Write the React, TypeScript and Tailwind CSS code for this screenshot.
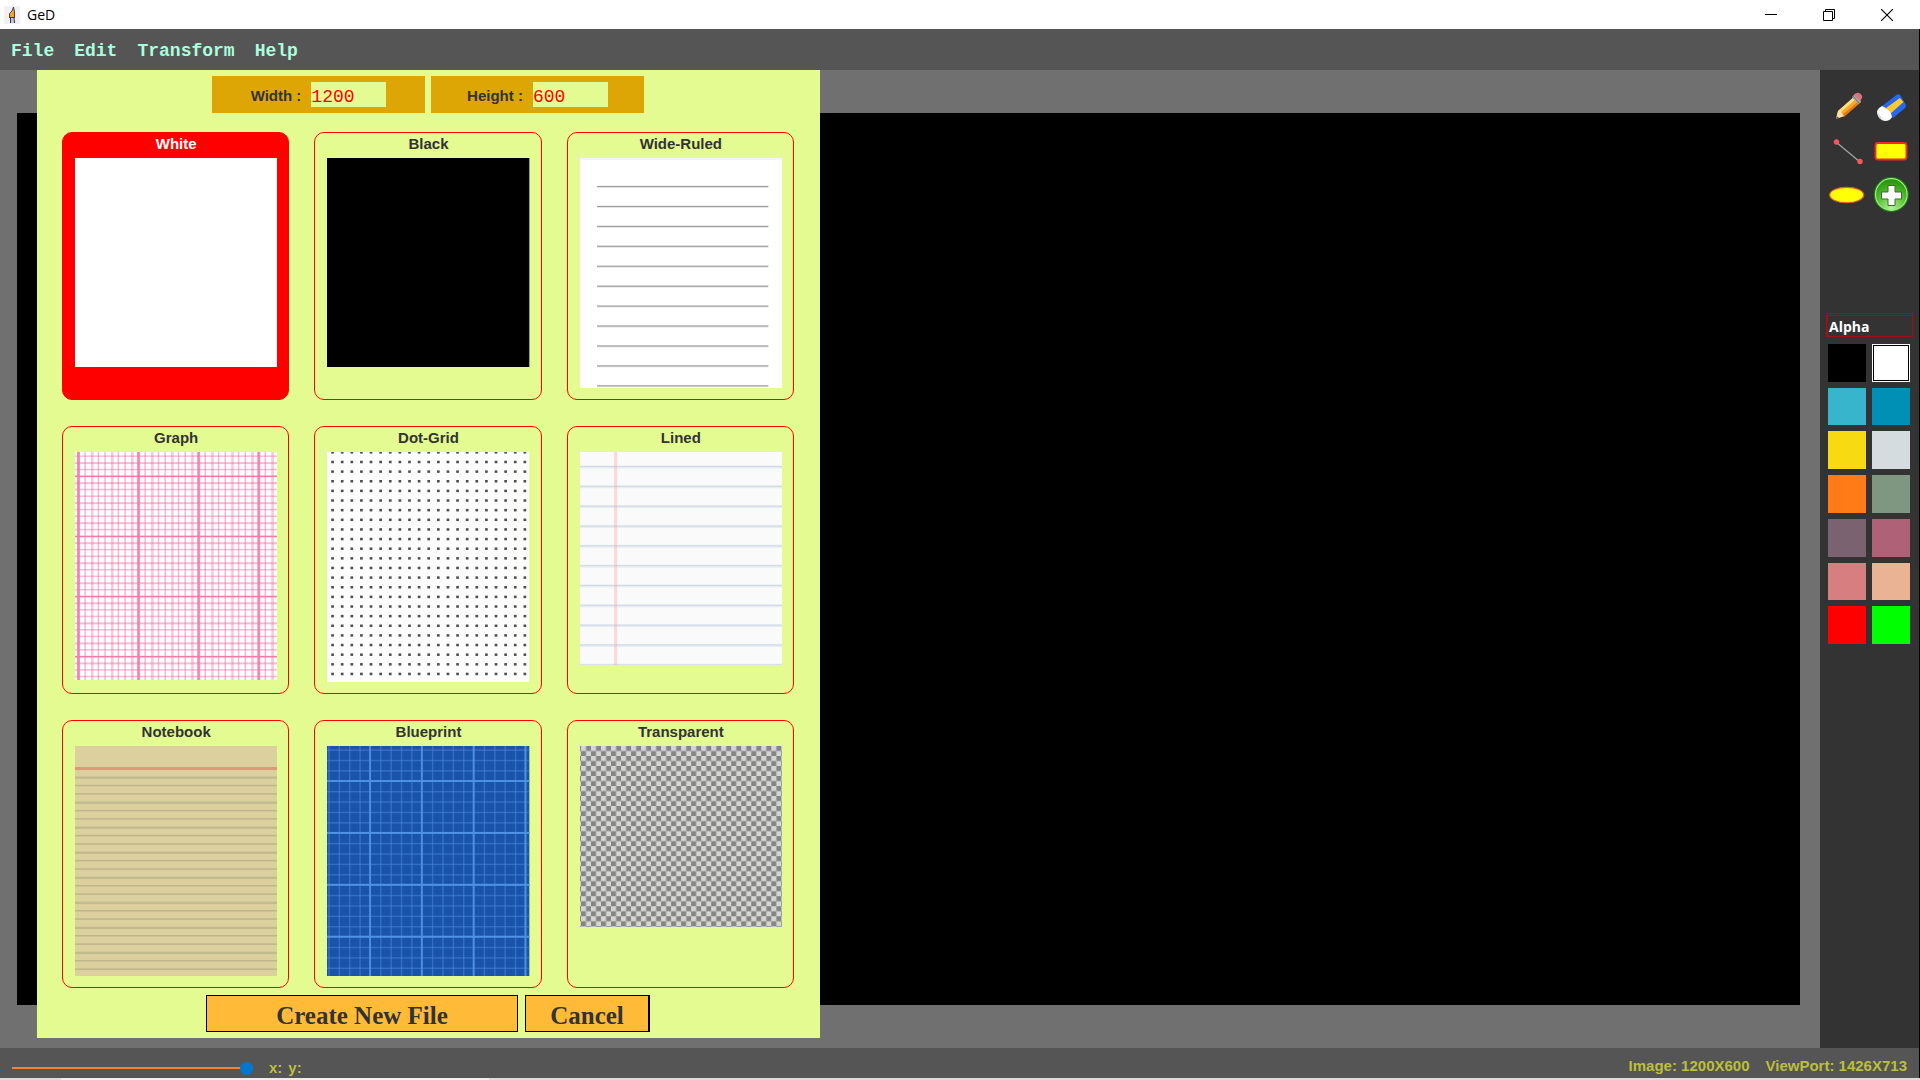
import { useState } from "react";
import type { ReactNode } from "react";

const range = (n: number) => Array.from({ length: n }, (_, i) => i);

function Paper({ height, children }: { height: number; children?: ReactNode }) {
  return (
    <svg viewBox={`0 0 202 ${height}`} className="block h-auto w-full" aria-hidden="true">
      {children}
    </svg>
  );
}

const white = (
  <Paper height={209}>
    <rect width="202" height="209" fill="#fff" />
  </Paper>
);

const black = (
  <Paper height={209}>
    <rect width="202" height="209" fill="#000" />
  </Paper>
);

const wideRuled = (
  <Paper height={230}>
    <rect width="202" height="230" fill="#fff" />
    <rect width="202" height="2" fill="#f4f4f4" />
    {range(11).map((i) => (
      <g key={i}>
        <rect x="17" y={27.5 + i * 19.9} width="171" height="2.4" fill="#e2e2e2" />
        <rect x="17" y={28 + i * 19.9} width="171" height="1" fill="#9c9c9c" />
      </g>
    ))}
  </Paper>
);

const graph = (
  <Paper height={228}>
    <rect width="202" height="228" fill="#fff" />
    {range(30).map((i) => (
      <rect key={i} x={2.6 + i * 6.667} y="0" width={i % 3 === 2 ? 2.6 : 1.5} height="228" fill="#f06a9c" fillOpacity={i % 3 === 2 ? 0.36 : 0.48} />
    ))}
    {range(34).map((i) => (
      <rect key={i} x="0" y={3.4 + i * 6.667} width="202" height={i % 3 === 1 ? 2 : 1.5} fill="#f06a9c" fillOpacity="0.45" />
    ))}
    {range(4).map((i) => (
      <g key={i} fill="#f27ca8">
        <rect x={2 + i * 60} y="0" width="3" height="228" fillOpacity="0.8" />
        <rect x="0" y={23.7 + i * 60} width="202" height="1.4" />
      </g>
    ))}
  </Paper>
);

const dotGrid = (
  <Paper height={230}>
    <rect width="202" height="230" fill="#fdfdfd" />
    {range(24).map((r) =>
      range(21).map((c) => (
        <rect key={`${r}-${c}`} x={4.2 + c * 9.6} y={r * 9.62 - 0.9} width="2.7" height="2.5" fill="#3c3c3c" fillOpacity="0.9" />
      )),
    )}
  </Paper>
);

const lined = (
  <Paper height={213}>
    <rect width="202" height="213" fill="#fafafa" />
    {range(11).map((i) => (
      <g key={i}>
        <rect x="0" y={13.4 + i * 19.8} width="202" height="3" fill="#e8ecf1" />
        <rect x="0" y={14 + i * 19.8} width="202" height="1" fill="#d2dbe6" />
      </g>
    ))}
    <rect x="34" y="0" width="3" height="213" fill="#ff9aa8" fillOpacity="0.36" />
  </Paper>
);

const notebook = (
  <Paper height={230}>
    <rect width="202" height="230" fill="#ddd09f" />
    <rect y="21" width="202" height="3" fill="#db9a7b" />
    {range(24).map((i) => (
      <rect key={i} y={30.4 + i * 8.333} width="202" height={i % 3 === 0 ? 2.4 : 1.5} fill="#b3ad87" fillOpacity={i % 3 === 0 ? 0.6 : 0.75} />
    ))}
  </Paper>
);

const blueprint = (
  <Paper height={230}>
    <rect width="202" height="230" fill="#1a53aa" />
    {range(20).map((i) => (
      <rect key={i} x={1.2 + i * 10.35} y="0" width="1.5" height="230" fill="#4a8ada" fillOpacity="0.5" />
    ))}
    {range(22).map((i) => (
      <rect key={i} x="0" y={3.4 + i * 10.37} width="202" height="1.5" fill="#4a8ada" fillOpacity="0.5" />
    ))}
    {range(4).map((i) => (
      <g key={i} fill="#4f92e6">
        <rect x={42 + i * 51.7} y="0" width="1.9" height="230" fillOpacity="0.9" />
        <rect x="0" y={34 + i * 51.8} width="202" height="1.9" />
      </g>
    ))}
  </Paper>
);

const transparent = (
  <Paper height={181}>
    <defs>
      <pattern id="checker" x="1" width="10" height="10" patternUnits="userSpaceOnUse">
        <rect width="10" height="10" fill="#d5d5d3" />
        <rect x="5" width="5" height="5" fill="#858585" />
        <rect y="5" width="5" height="5" fill="#858585" />
      </pattern>
    </defs>
    <rect width="202" height="181" fill="url(#checker)" />
  </Paper>
);

const papers = [
  { name: "White", art: white },
  { name: "Black", art: black },
  { name: "Wide-Ruled", art: wideRuled },
  { name: "Graph", art: graph },
  { name: "Dot-Grid", art: dotGrid },
  { name: "Lined", art: lined },
  { name: "Notebook", art: notebook },
  { name: "Blueprint", art: blueprint },
  { name: "Transparent", art: transparent },
];

const tools = [
  {
    name: "Pencil",
    art: (
      <>
        <path d="M8 31 L10 23 L27 8 L33 14 L16 28 Z" fill="#f9a825" />
        <path d="M10 23 L26 9 L28 11 L12 25 Z" fill="#ffe08a" />
        <path d="M14 27 L31 13 L33 14 L16 29 Z" fill="#e07b12" />
        <path d="M8 31 L10 23 L13 24 L16 28 Z" fill="#f7dfae" />
        <path d="M8 31 L9 28.500 L11 30 Z" fill="#4a4036" />
        <path d="M24 9 L27 6 L33 13 L30 16 Z" fill="#a9a9a9" />
        <path d="M25 8 L31 15" stroke="#6c6c6c" />
        <path d="M26 7 Q28 4 31 5 Q35 7 34 10 L32 13 Z" fill="#d9747c" />
      </>
    ),
  },
  {
    name: "Eraser",
    art: (
      <>
        <path d="M10 18 L25 6.500 Q27 6 28 7 L34 17 Q34 19 33 20 L21 30 Z" fill="#2468f5" />
        <path d="M14 20 L28 10 L31.500 14 L18 26 Z" fill="#fdc92e" />
        <path d="M10 18 Q5 21 5 24 Q6 32 13 33 Q18 33 20 29 Q19 22 10 18 Z" fill="#fff" />
        <path d="M5 24 Q6 31 12 33 L9 29 Z" fill="#d4d7de" />
      </>
    ),
  },
  {
    name: "Line",
    art: (
      <>
        <path d="M8 10 L32 30" stroke="#a3a3a3" strokeWidth="1.300" />
        <circle cx="8.500" cy="10" r="2.700" fill="#f4575c" />
        <circle cx="32" cy="29.500" r="2.700" fill="#f4575c" />
      </>
    ),
  },
  {
    name: "Rectangle",
    art: <rect x="3.500" y="11" width="31" height="16.500" rx="2.500" fill="#ffff05" stroke="#ef2b2b" strokeWidth="1.900" />,
  },
  {
    name: "Ellipse",
    art: <ellipse cx="18.700" cy="19" rx="17" ry="7.700" fill="#ffff05" stroke="#e3622f" strokeWidth="1.200" />,
  },
  {
    name: "Add",
    art: (
      <>
        <defs>
          <radialGradient id="green" cx="0.5" cy="0.95" r="0.95">
            <stop offset="0" stopColor="#b6f29b" />
            <stop offset="0.45" stopColor="#62c63c" />
            <stop offset="1" stopColor="#1f9107" />
          </radialGradient>
        </defs>
        <circle cx="19.300" cy="18.500" r="17.500" fill="#16850a" />
        <circle cx="19.300" cy="18.500" r="15.800" fill="url(#green)" stroke="#a5e58d" strokeWidth="1.200" />
        <path d="M16 9.500 H23 V16 H29.500 V23 H23 V29.500 H16 V23 H9.500 V16 H16 Z" fill="#fff" stroke="#3c6e2c" strokeWidth="1" />
      </>
    ),
  },
];

const swatches = [
  { name: "Black", tone: "bg-black" },
  { name: "White", tone: "bg-white" },
  { name: "Sky", tone: "bg-[#36b5cc]" },
  { name: "Ocean", tone: "bg-[#0090b6]" },
  { name: "Yellow", tone: "bg-[#f7da11]" },
  { name: "Mist", tone: "bg-[#d4dce0]" },
  { name: "Orange", tone: "bg-[#ff7b17]" },
  { name: "Sage", tone: "bg-[#7f9680]" },
  { name: "Plum", tone: "bg-[#7a6270]" },
  { name: "Rose", tone: "bg-[#af6277]" },
  { name: "Coral", tone: "bg-[#d77e81]" },
  { name: "Peach", tone: "bg-[#e9b394]" },
  { name: "Red", tone: "bg-[#ff0000]" },
  { name: "Green", tone: "bg-[#00ff00]" },
];

function TitleBar() {
  return (
    <header className="flex h-[29px] shrink-0 items-center bg-white pr-1 pl-1 text-black">
      <svg width="16" height="18" viewBox="0 0 16 18" aria-hidden="true">
        <rect width="16" height="18" fill="#f1f1f3" />
        <path d="M9.500 1 L11 6 V11 H5 V8 L8 5 Z" fill="#f5a32a" />
        <path d="M9.500 1 L8 5 L5.500 7.500 V11 M9.500 1 L10.500 6 V11" fill="none" stroke="#3a3550" strokeWidth="0.900" />
        <path d="M5 11.500 H11" stroke="#4a3a30" />
        <path d="M7 12 H9.500 L10 17 H7 Z" fill="#c4c6da" />
        <path d="M6.500 12 V17 M10 12 L10.500 17" stroke="#343152" />
      </svg>
      <h1 className="ml-[7px] flex-1 font-['Open_Sans',sans-serif] text-[14px] leading-5">GeD</h1>
      <button aria-label="Minimize" className="flex h-full w-[58px] items-center justify-center">
        <svg width="12" height="12" viewBox="0 0 12 12"><path d="M0 5.500 H12" stroke="#000" /></svg>
      </button>
      <button aria-label="Restore" className="flex h-full w-[58px] items-center justify-center">
        <svg width="12" height="12" viewBox="0 0 12 12" fill="none" stroke="#000">
          <path d="M0.500 2.500 H9.500 V11.500 H0.500 Z M2.500 2.500 V0.500 H11.500 V9.500 H9.500" />
        </svg>
      </button>
      <button aria-label="Close" className="flex h-full w-[58px] items-center justify-center">
        <svg width="12" height="12" viewBox="0 0 12 12"><path d="M0 0 L12 12 M12 0 L0 12" stroke="#000" strokeWidth="1.100" /></svg>
      </button>
    </header>
  );
}

function SizeField({ label, value, onChange }: { label: string; value: string; onChange: (v: string) => void }) {
  return (
    <label className="flex h-[37px] w-[213px] items-center justify-center gap-2.5 bg-[#dea605] text-[15px] leading-5 font-bold">
      <span className="pt-0.5">{label} :</span>
      <input
        type="text"
        value={value}
        onChange={(e) => onChange(e.target.value)}
        className="h-[25px] w-[75px] bg-[#e4fb92] pt-1 font-['Liberation_Mono',monospace] text-[18px] leading-5 font-normal text-[#ff0000] outline-none"
      />
    </label>
  );
}

function NewFileDialog() {
  const [width, setWidth] = useState("1200");
  const [height, setHeight] = useState("600");
  const [paper, setPaper] = useState("White");
  return (
    <form
      onSubmit={(e) => e.preventDefault()}
      className="absolute top-0 left-[37px] w-[783px] bg-[#e4fb92] py-1.5 pr-[26px] pl-[25px] text-[#333333]"
    >
      <div className="flex justify-center gap-1.5">
        <SizeField label="Width" value={width} onChange={setWidth} />
        <SizeField label="Height" value={height} onChange={setHeight} />
      </div>
      <div className="mt-[19px] grid grid-cols-3 gap-x-[25px] gap-y-[26px]">
        {papers.map((p) => (
          <button
            key={p.name}
            type="button"
            aria-pressed={p.name === paper}
            onClick={() => setPaper(p.name)}
            className="flex h-[268px] flex-col items-stretch rounded-[10px] border border-[#ff0000] pr-[11px] pl-3 text-[15px] leading-[18px] font-bold aria-pressed:bg-[#ff0000] aria-pressed:text-white"
          >
            <span className="h-[25px] pt-0.5 text-center">{p.name}</span>
            {p.art}
          </button>
        ))}
      </div>
      <div className="mt-[7px] flex justify-center gap-[7px] font-['Liberation_Serif',serif] text-[25px] leading-7 font-bold">
        <button type="submit" className="h-[37px] w-[312px] border border-black bg-[#ffbb38] pt-1">Create New File</button>
        <button type="button" className="h-[37px] w-[125px] border border-r-2 border-black bg-[#ffbb38] pt-1">Cancel</button>
      </div>
    </form>
  );
}

function SidePanel() {
  const [color, setColor] = useState("White");
  return (
    <aside className="flex w-[99px] shrink-0 flex-col bg-[#333333] pt-[18px] pr-1.5 pl-1.5">
      <div className="ml-0.5 grid w-[82px] grid-cols-2 gap-1.5">
        {tools.map((t) => (
          <button key={t.name} aria-label={t.name} className="h-[38px]">
            <svg width="38" height="38" viewBox="0 0 38 38" fill="none">{t.art}</svg>
          </button>
        ))}
      </div>
      <button className="mt-[99px] h-6 border border-t-3 border-l-2 border-[#9c1216] pt-0.5 [border-top-style:double] text-left font-['Open_Sans',sans-serif] text-[14px] leading-[18px] font-bold text-white">
        <span className="pl-px">Alpha</span>
      </button>
      <div className="mt-[7px] ml-0.5 grid h-[300px] w-[82px] grid-cols-2 grid-rows-7 gap-1.5">
        {swatches.map((s) => (
          <button
            key={s.name}
            aria-label={s.name}
            aria-pressed={s.name === color}
            onClick={() => setColor(s.name)}
            className={`${s.tone} aria-pressed:outline aria-pressed:-outline-offset-2 aria-pressed:outline-black`}
          />
        ))}
      </div>
    </aside>
  );
}

export default function App() {
  const [zoom, setZoom] = useState(100);
  return (
    <div className="flex h-screen flex-col overflow-hidden bg-[#707070] font-['Liberation_Sans',Arial,sans-serif]">
      <TitleBar />
      <div className="flex min-h-0 flex-1 flex-col border-r border-black">
        <nav className="flex h-[41px] shrink-0 items-center gap-5 bg-[#555555] pt-0.5 pl-[11px] font-['Liberation_Mono',monospace] text-[18px] leading-5 font-bold text-[#aaffdd]">
          {["File", "Edit", "Transform", "Help"].map((m) => (
            <button key={m}>{m}</button>
          ))}
        </nav>
        <div className="flex min-h-0 flex-1">
          <main className="relative flex flex-1 py-[43px] pr-5 pl-[17px]">
            <div className="flex-1 bg-black" />
            <NewFileDialog />
          </main>
          <SidePanel />
        </div>
        <footer className="flex h-[30px] shrink-0 items-center bg-[#555555] pt-0.5 pr-3 pl-3 text-[15px] leading-[18px] font-bold text-[#bcbf3c]">
          <input
            type="range"
            aria-label="Zoom"
            value={zoom}
            onChange={(e) => setZoom(Number(e.target.value))}
            className="mt-2 h-[13px] w-[241px] appearance-none bg-transparent [&::-webkit-slider-runnable-track]:h-0.5 [&::-webkit-slider-runnable-track]:bg-[#f58232] [&::-webkit-slider-thumb]:-mt-[5px] [&::-webkit-slider-thumb]:size-[13px] [&::-webkit-slider-thumb]:appearance-none [&::-webkit-slider-thumb]:rounded-full [&::-webkit-slider-thumb]:bg-[#0078d0]"
          />
          <span className="mt-2 ml-4">x:</span>
          <span className="mt-2 ml-1.5">y:</span>
          <span className="mt-1 ml-auto">Image: 1200X600</span>
          <span className="mt-1 ml-4">ViewPort: 1426X713</span>
        </footer>
      </div>
      <div className="flex h-0.5 shrink-0 bg-[#dddddd]">
        <div className="ml-[61px] w-[428px] bg-[#eeeeee]" />
      </div>
    </div>
  );
}
